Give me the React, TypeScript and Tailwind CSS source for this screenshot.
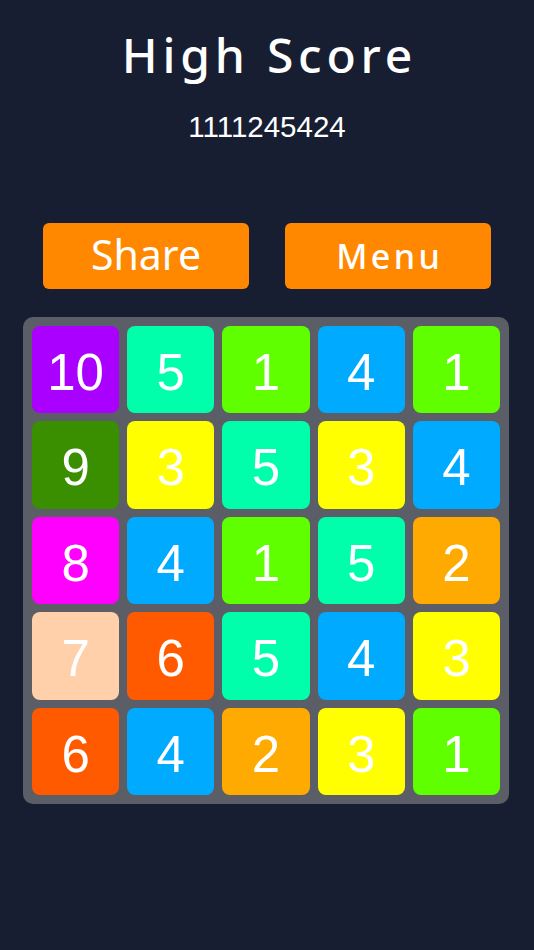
import React from 'react';

const tiles: { n: number; c: string }[][] = [
    [
        { n: 10, c: 'bg-[#aa00ff]' },
        { n: 5, c: 'bg-[#00ffaa]' },
        { n: 1, c: 'bg-[#5fff00]' },
        { n: 4, c: 'bg-[#00aaff]' },
        { n: 1, c: 'bg-[#5fff00]' },
    ],
    [
        { n: 9, c: 'bg-[#3a8f00]' },
        { n: 3, c: 'bg-[#ffff00]' },
        { n: 5, c: 'bg-[#00ffaa]' },
        { n: 3, c: 'bg-[#ffff00]' },
        { n: 4, c: 'bg-[#00aaff]' },
    ],
    [
        { n: 8, c: 'bg-[#ff00ff]' },
        { n: 4, c: 'bg-[#00aaff]' },
        { n: 1, c: 'bg-[#5fff00]' },
        { n: 5, c: 'bg-[#00ffaa]' },
        { n: 2, c: 'bg-[#ffaa00]' },
    ],
    [
        { n: 7, c: 'bg-[#ffd0aa]' },
        { n: 6, c: 'bg-[#ff5a00]' },
        { n: 5, c: 'bg-[#00ffaa]' },
        { n: 4, c: 'bg-[#00aaff]' },
        { n: 3, c: 'bg-[#ffff00]' },
    ],
    [
        { n: 6, c: 'bg-[#ff5a00]' },
        { n: 4, c: 'bg-[#00aaff]' },
        { n: 2, c: 'bg-[#ffaa00]' },
        { n: 3, c: 'bg-[#ffff00]' },
        { n: 1, c: 'bg-[#5fff00]' },
    ],
];

const Tile: React.FC<{ n: number; c: string }> = ({ n, c }) => (
    <div className={`${c} rounded-[8px] h-[87.5px] pt-[6px] flex items-center justify-center text-white text-[51px] leading-none font-['Liberation_Sans',sans-serif]`}>
        {n}
    </div>
);

const App: React.FC = () => {
    return (
        <div className="min-h-[950px] w-full bg-[#171e32] pt-[31px] font-['Noto_Sans',sans-serif]">
            <h1 className="text-center text-white text-[48px] font-medium leading-none tracking-[0.1em] pl-[0.1em]">High Score</h1>
            <p className="mt-[33px] text-center text-white text-[29.5px] leading-none font-['Liberation_Sans',sans-serif]">1111245424</p>

            <div className="mt-[81px] flex justify-center gap-[36px]">
                <button className="w-[206px] h-[66px] rounded-[6px] bg-[#ff8800] text-white text-[41px] font-normal leading-none pb-[2px]">
                    Share
                </button>
                <button className="w-[206px] h-[66px] rounded-[6px] bg-[#ff8800] text-white text-[34px] font-medium tracking-[0.1em] pl-[0.1em] leading-none">
                    Menu
                </button>
            </div>

            <div className="mt-[28px] ml-[23px] w-[486px] rounded-[10px] bg-[#5b5e66] p-[9px] grid grid-cols-5 gap-[8px]">
                {tiles.flat().map((t, i) => (
                    <Tile key={i} n={t.n} c={t.c} />
                ))}
            </div>
        </div>
    );
};

export default App;
